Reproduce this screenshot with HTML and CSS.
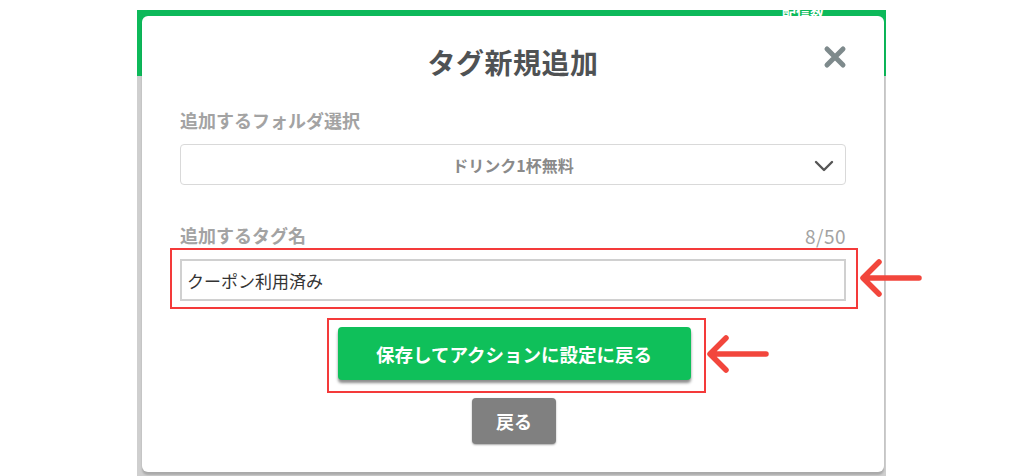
FILE: index.html
```html
<!DOCTYPE html>
<html lang="ja">
<head>
<meta charset="utf-8">
<link rel="stylesheet" href="styles.css">
</head>
<body>
<div class="stage">
  <div class="app">
    <div class="app-header"><span class="hdr-text">配信数</span></div>
    <div class="modal">
      <div class="title-row">
        <h1 class="title">タグ新規追加</h1>
        <svg class="close" width="24" height="24" viewBox="0 0 24 24"><path d="M4 4 L20 20 M20 4 L4 20" stroke="#7e8a8c" stroke-width="5" stroke-linecap="round" fill="none"/></svg>
      </div>
      <div class="field">
        <div class="label">追加するフォルダ選択</div>
        <div class="select">
          <span class="select-text">ドリンク1杯無料</span>
          <svg class="chev" width="20" height="12" viewBox="0 0 20 12"><path d="M2 2 L10 10 L18 2" stroke="#555" stroke-width="2.4" fill="none" stroke-linecap="round" stroke-linejoin="round"/></svg>
        </div>
      </div>
      <div class="field field-tag">
        <div class="label-row"><span class="label">追加するタグ名</span><span class="count">8/50</span></div>
        <div class="mark mark-input">
          <div class="input">クーポン利用済み</div>
        </div>
      </div>
      <div class="actions">
        <div class="mark mark-btn"><div class="btn-primary">保存してアクションに設定に戻る</div></div>
        <div class="btn-back">戻る</div>
      </div>
    </div>
  </div>
  <svg class="arrow arrow1" width="64" height="44" viewBox="0 0 64 44"><path d="M60 22 L6 22 M20 6 L4 22 L20 38" stroke="#f2463c" stroke-width="5.5" fill="none" stroke-linecap="round" stroke-linejoin="round"/></svg>
  <svg class="arrow arrow2" width="64" height="44" viewBox="0 0 64 44"><path d="M60 22 L6 22 M20 6 L4 22 L20 38" stroke="#f2463c" stroke-width="5.5" fill="none" stroke-linecap="round" stroke-linejoin="round"/></svg>
</div>
</body>
</html>
```
FILE: styles.css
```css
* { box-sizing: border-box; }
html, body { margin: 0; padding: 0; background: #fff; }
body {
  font-family: "Noto Sans CJK JP", "Noto Sans", sans-serif;
  width: 1024px;
  height: 476px;
  overflow: hidden;
}
.stage {
  position: relative;
  width: 1024px;
  height: 476px;
  padding: 10px 0 0 137px;
}
.app {
  position: relative;
  width: 749px;
  height: 466px;
  background: #cfcfcf;
}
.app-header {
  height: 66px;
  background: #0db95a;
  position: relative;
}
.hdr-text {
  position: absolute;
  right: 62px;
  top: -4px;
  color: #fff;
  font-size: 14px;
  line-height: 12px;
  font-weight: 700;
}
.modal {
  position: absolute;
  left: 5px;
  top: 6px;
  width: 742px;
  height: 456px;
  background: #fff;
  border-radius: 6px;
  padding: 0 38px;
  box-shadow: 0 3px 2px rgba(0,0,0,0.18);
}
.title-row {
  position: relative;
  padding-top: 27px;
  height: 92px;
  text-align: center;
}
.title {
  margin: 0;
  font-size: 28px;
  line-height: 38px;
  font-weight: 700;
  color: #4f5254;
  letter-spacing: 0.5px;
}
.close {
  position: absolute;
  right: -1px;
  top: 29px;
}
.label {
  font-size: 18px;
  line-height: 24px;
  font-weight: 700;
  color: #a3a3a3;
}
.field .label { display: block; }
.select {
  margin-top: 12px;
  height: 41px;
  border: 1px solid #d9d9d9;
  border-radius: 4px;
  display: flex;
  align-items: center;
  justify-content: center;
  position: relative;
}
.select-text {
  font-size: 16px;
  font-weight: 700;
  color: #8a8a8a;
}
.chev {
  position: absolute;
  right: 11px;
  top: 15px;
}
.field-tag { margin-top: 38px; }
.label-row {
  display: flex;
  justify-content: space-between;
  align-items: center;
  height: 24px;
}
.count {
  font-size: 19px;
  color: #a3a3a3;
  letter-spacing: 0.5px;
}
.mark {
  border: 2px solid #f43a3a;
}
.mark-input {
  margin: 1px -12px 0 -10px;
  padding: 9px 10px 6px 8px;
}
.input {
  height: 42px;
  border: 2px solid #d0d0d0;
  padding: 0 5px;
  display: flex;
  align-items: center;
  font-size: 17px;
  color: #333;
}
.actions {
  display: flex;
  flex-direction: column;
  align-items: center;
  margin-top: 9px;
}
.mark-btn {
  padding: 7px 13px 11px 9px;
  margin-left: 6px;
}
.btn-primary {
  width: 353px;
  height: 53px;
  background: #0fc05a;
  border-radius: 4px;
  color: #fff;
  font-size: 18.5px;
  font-weight: 700;
  display: flex;
  align-items: center;
  justify-content: center;
  box-shadow: 0 3px 3px rgba(0,0,0,0.45);
}
.btn-back {
  margin-top: 5px;
  width: 84px;
  height: 46px;
  background: #808080;
  border-radius: 4px;
  color: #fff;
  font-size: 18px;
  font-weight: 700;
  display: flex;
  align-items: center;
  justify-content: center;
  box-shadow: 0 1px 2px rgba(0,0,0,0.35);
  margin-left: 2px;
}
.arrow { position: absolute; }
.arrow1 { left: 859px; top: 256px; }
.arrow2 { left: 706px; top: 332px; }
```
